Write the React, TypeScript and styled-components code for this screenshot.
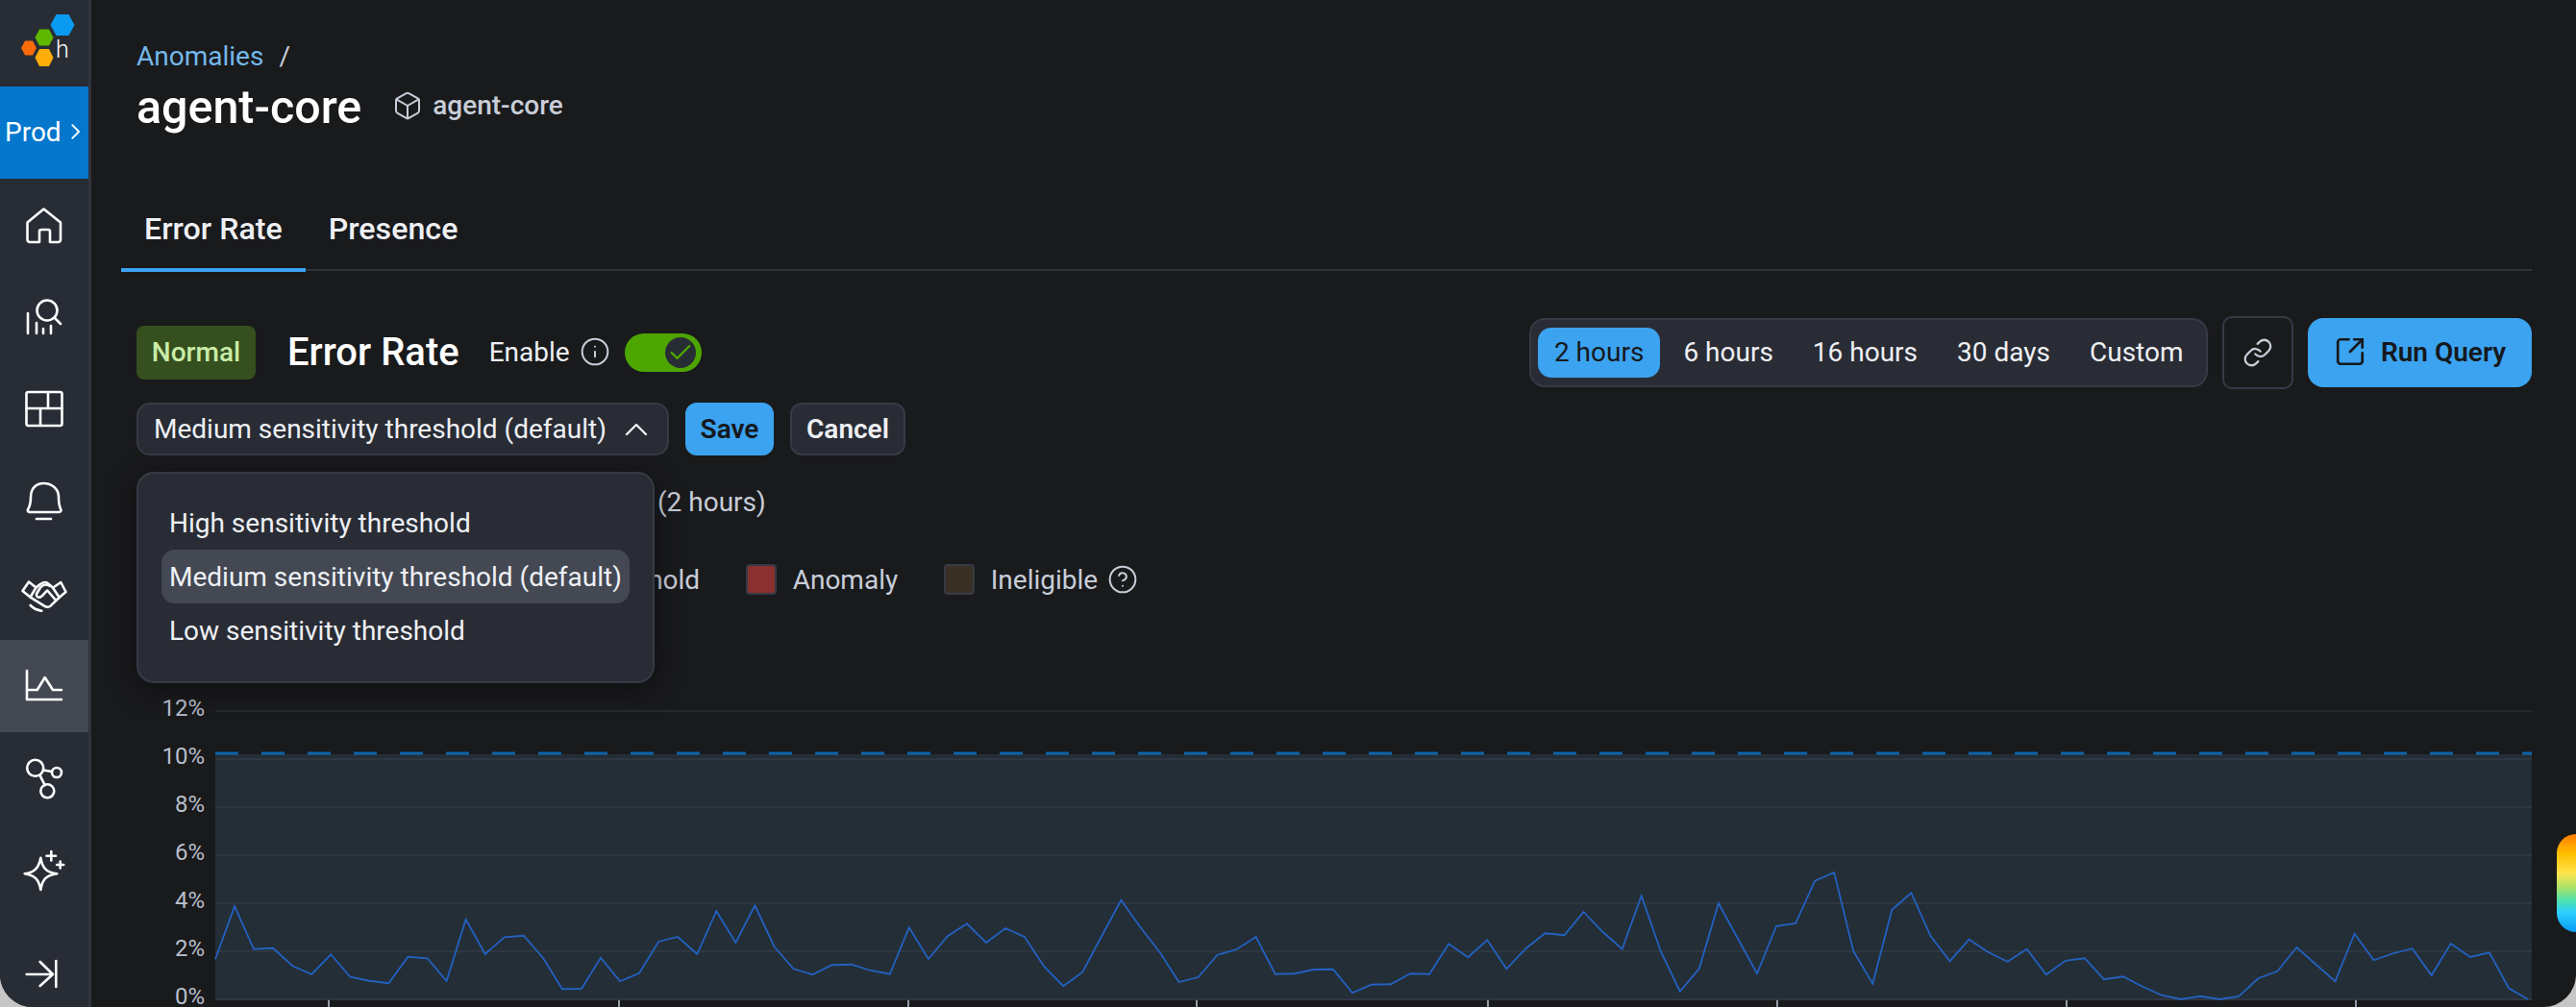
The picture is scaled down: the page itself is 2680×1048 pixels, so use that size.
import styled, { createGlobalStyle } from 'styled-components';
import {
  Box,
  ChevronRight,
  ChevronUp,
  Check,
  CircleHelp,
  Info,
  Link,
  SquareArrowOutUpRight,
} from 'lucide-react';

const GlobalStyle = createGlobalStyle`
  html, body {
    margin: 0;
    padding: 0;
    background: #c6c6c6;
  }
  body {
    font-family: Roboto, "Liberation Sans", sans-serif;
    font-size: 28px;
    color: #eef0f4;
  }
`;

const Shell = styled.div`
  position: relative;
  display: flex;
  width: 2680px;
  height: 1048px;
  overflow: hidden;
  background: #191a1c;
  border-radius: 0 0 34px 34px;
`;

const Sidebar = styled.nav`
  flex: none;
  display: flex;
  flex-direction: column;
  box-sizing: content-box;
  width: 92px;
  background: #282c35;
  border-right: 3px solid #30343d;
`;

const LogoWrap = styled.div`
  height: 90px;
  flex: none;
`;

const EnvButton = styled.div`
  flex: none;
  display: flex;
  align-items: center;
  justify-content: center;
  box-sizing: border-box;
  height: 96px;
  gap: 1px;
  padding: 0 0 2px 5px;
  background: #0577cc;
  color: #fff;
`;

const NavItem = styled.div<{ $active?: boolean }>`
  flex: none;
  display: flex;
  align-items: center;
  justify-content: center;
  height: 96px;
  background: ${(p) => (p.$active ? '#434853' : 'transparent')};
`;

const CollapseItem = styled(NavItem)`
  margin-top: 11px;
`;

const NavSvg = styled.svg`
  width: 48px;
  height: 48px;
  fill: none;
  stroke: #fff;
  stroke-width: 2.6;
  stroke-linecap: round;
  stroke-linejoin: round;
`;

const Main = styled.main`
  flex: 1;
  min-width: 0;
  padding: 40px 46px 0 47px;
`;

const Breadcrumb = styled.div`
  display: flex;
  align-items: center;
  gap: 16px;
  height: 36px;
`;

const CrumbLink = styled.span`
  color: #74b8ea;
`;

const CrumbSlash = styled.span`
  color: #c8cdd8;
`;

const TitleRow = styled.div`
  display: flex;
  align-items: center;
  height: 72px;
`;

const Title = styled.h1`
  margin: 0 32px 2px 0;
  font-size: 48.4px;
  font-weight: 500;
  color: #fff;
`;

const Subtitle = styled.span`
  display: flex;
  align-items: center;
  gap: 10px;
  margin-bottom: 5px;
  font-weight: 500;
  color: #c8cdd8;
`;

const Tabs = styled.div`
  display: flex;
  align-items: flex-end;
  box-sizing: border-box;
  height: 104px;
  margin: 30px 0 0 -16px;
  border-bottom: 2px solid #30343d;
`;

const Tab = styled.div<{ $active?: boolean }>`
  display: flex;
  align-items: flex-end;
  box-sizing: border-box;
  height: 105px;
  margin-bottom: -3px;
  padding: 0 24px 23px;
  line-height: 36px;
  font-size: 32.2px;
  font-weight: 500;
  color: #eef0f4;
  border-bottom: 4px solid ${(p) => (p.$active ? '#3ba3ef' : 'transparent')};
`;

const ControlRow = styled.div`
  display: flex;
  align-items: center;
  justify-content: space-between;
  height: 72px;
  margin-top: 49px;
`;

const ControlGroup = styled.div`
  display: flex;
  align-items: center;
`;

const Badge = styled.span`
  display: flex;
  align-items: center;
  justify-content: center;
  box-sizing: border-box;
  width: 124px;
  height: 56px;
  margin-right: 33px;
  padding-bottom: 2px;
  border-radius: 8px;
  background: #354f1e;
  color: #c9ecA6;
  font-weight: 500;
`;

const SectionTitle = styled.h2`
  margin: 0 31px 2px 0;
  font-size: 40px;
  font-weight: 500;
  color: #fff;
`;

const EnableLabel = styled.span`
  display: flex;
  align-items: center;
  gap: 10px;
  margin: 0 15px 2px 0;
  color: #eef0f4;
`;

const Toggle = styled.span`
  display: flex;
  align-items: center;
  justify-content: flex-end;
  box-sizing: border-box;
  width: 80px;
  height: 40px;
  padding-right: 6px;
  border-radius: 20px;
  background: #4da600;
`;

const ToggleThumb = styled.span`
  display: flex;
  align-items: center;
  justify-content: center;
  width: 32px;
  height: 32px;
  border-radius: 50%;
  background: #282c35;
`;

const RangeGroup = styled.div`
  display: flex;
  align-items: center;
  gap: 8px;
  box-sizing: border-box;
  height: 72px;
  padding: 0 7px;
  border: 2px solid #363a45;
  border-radius: 16px;
  background: #292c35;
`;

const RangeOption = styled.span<{ $active?: boolean }>`
  display: flex;
  align-items: center;
  box-sizing: border-box;
  height: 52px;
  padding: 0 16.5px 2px;
  border-radius: 14px;
  background: ${(p) => (p.$active ? '#3ba3ef' : 'transparent')};
  color: ${(p) => (p.$active ? '#16181c' : '#eef0f4')};
`;

const LinkButton = styled.span`
  display: flex;
  align-items: center;
  justify-content: center;
  box-sizing: border-box;
  width: 74px;
  height: 76px;
  margin: 0 15px;
  border: 2px solid #363a45;
  border-radius: 10px;
  color: #c8cdd8;
`;

const RunButton = styled.span`
  display: flex;
  align-items: center;
  justify-content: center;
  gap: 15px;
  box-sizing: border-box;
  width: 233px;
  height: 72px;
  padding-bottom: 2px;
  border-radius: 16px;
  background: #3ba3ef;
  color: #16181c;
  font-weight: 600;
`;

const SelectRow = styled.div`
  display: flex;
  align-items: center;
  gap: 17px;
  height: 55px;
  margin-top: 16px;
`;

const SelectWrap = styled.div`
  position: relative;
  height: 100%;
`;

const SelectBox = styled.div`
  display: flex;
  align-items: center;
  justify-content: space-between;
  box-sizing: border-box;
  width: 554px;
  height: 100%;
  padding: 0 12px 0 16px;
  border: 2px solid #363a45;
  border-radius: 14px;
  background: #292c35;
  color: #eef0f4;
`;

const Dropdown = styled.div`
  position: absolute;
  top: calc(100% + 17px);
  left: 0;
  z-index: 2;
  box-sizing: border-box;
  width: 539px;
  height: 220px;
  padding: 23px 24px;
  border: 2px solid #363a45;
  border-radius: 18px;
  background: #292c35;
  box-shadow: 0 6px 30px rgba(0, 0, 0, 0.45);
`;

const DropdownItem = styled.div<{ $active?: boolean }>`
  display: flex;
  align-items: center;
  height: 56px;
  padding: 0 8px;
  border-radius: 14px;
  white-space: nowrap;
  background: ${(p) => (p.$active ? '#434853' : 'transparent')};
  color: #eef0f4;
`;

const ActionButton = styled.span<{ $primary?: boolean }>`
  display: flex;
  align-items: center;
  justify-content: center;
  box-sizing: border-box;
  width: ${(p) => (p.$primary ? '92px' : '120px')};
  height: 100%;
  border-radius: 12px;
  font-weight: 600;
  background: ${(p) => (p.$primary ? '#3ba3ef' : '#292c35')};
  border: 2px solid ${(p) => (p.$primary ? '#3ba3ef' : '#363a45')};
  color: ${(p) => (p.$primary ? '#16181c' : '#eef0f4')};
`;

const TimeNote = styled.div`
  height: 36px;
  margin-top: 31px;
  padding-left: 542px;
  line-height: 36px;
  color: #c8cdd8;
`;

const Legend = styled.div`
  display: flex;
  align-items: center;
  height: 36px;
  margin-top: 44px;
  padding-left: 461.5px;
  color: #c8cdd8;
`;

const LegendLabel = styled.span`
  display: flex;
  align-items: center;
  gap: 10px;
  margin-right: 47.5px;
`;

const Swatch = styled.span<{ $color: string }>`
  box-sizing: border-box;
  width: 32px;
  height: 32px;
  margin-right: 17px;
  border: 2px solid #363a45;
  border-radius: 4px;
  background: ${(p) => p.$color};
`;

const ChartSvg = styled.svg`
  display: block;
  width: 2492px;
  height: 328px;
  margin-top: 99px;
  overflow: hidden;
`;

const AxisLabel = styled.text`
  font-family: Roboto, "Liberation Sans", sans-serif;
  font-size: 24px;
  fill: #b8bfcc;
  text-anchor: end;
`;

const FloatingTab = styled.div`
  position: absolute;
  right: 0;
  top: 868px;
  width: 20px;
  height: 102px;
  border-radius: 20px 0 0 20px;
  background: linear-gradient(
    180deg,
    #ff7a00 0%,
    #ffbf00 20%,
    #ffe44d 40%,
    #a6e36b 55%,
    #4de0b0 68%,
    #2bd0ff 80%,
    #0a9af2 100%
  );
`;

const ranges = ['2 hours', '6 hours', '16 hours', '30 days', 'Custom'];
const sensitivities = [
  'High sensitivity threshold',
  'Medium sensitivity threshold (default)',
  'Low sensitivity threshold',
];
const axis = [12, 10, 8, 6, 4, 2, 0];
const ticks = [342, 644, 945, 1245, 1548, 1849, 2150, 2451];
const errorRate = [
  1.67, 3.87, 2.09, 2.13, 1.39, 1.04, 1.87, 0.93, 0.77, 0.67, 1.77, 1.71, 0.76, 3.33, 1.88, 2.59,
  2.65, 1.73, 0.43, 0.44, 1.73, 0.75, 1.09, 2.4, 2.6, 1.88, 3.67, 2.36, 3.91, 2.2, 1.27, 1.03, 1.43,
  1.45, 1.2, 1.05, 2.99, 1.68, 2.63, 3.15, 2.36, 2.96, 2.59, 1.37, 0.55, 1.13, 2.64, 4.13, 3.0, 1.97,
  0.72, 0.92, 1.85, 2.08, 2.6, 1.05, 1.07, 1.24, 1.25, 0.27, 0.61, 0.63, 1.07, 1.05, 2.31, 1.75, 2.47,
  1.27, 2.11, 2.75, 2.67, 3.64, 2.8, 2.09, 4.31, 2.0, 0.33, 1.28, 4.0, 2.53, 1.07, 3.05, 3.16, 4.93,
  5.28, 2.0, 0.65, 3.73, 4.43, 2.64, 1.59, 2.49, 1.96, 1.57, 2.09, 1.03, 1.61, 1.71, 0.83, 0.95, 0.53,
  0.17, 0, 0.13, 0, 0.12, 0.87, 1.17, 2.16, 1.45, 0.75, 2.73, 1.63, 1.91, 2.11, 1.0, 2.32, 1.76, 1.95,
  0.47, 0,
];

// chart coordinates: the svg starts at page x 142, y 720
const plotLeft = 82;
const plotRight = 2492;
const zeroY = 320;
const percentY = (v: number) => zeroY - v * 25;
const linePoints = errorRate
  .map((v, i) => `${plotLeft + i * 20.05},${percentY(v)}`)
  .join(' ');

const Logo = () => (
  <svg width="92" height="90" viewBox="0 0 92 90">
    <polygon points="52.5,26 58.5,15 71.5,15 77.5,26 71.5,37 58.5,37" fill="#0a9af2" />
    <polygon points="36.5,39 41,30.5 51,30.5 55.5,39 51,47.5 41,47.5" fill="#5fb700" />
    <polygon points="22,50 26,42.5 34,42.5 38,50 34,57.5 26,57.5" fill="#f96b0a" />
    <polygon points="36.5,60 41,51 51,51 55.5,60 51,69 41,69" fill="#ffad0a" />
    <text x="58" y="60" fontFamily="Roboto, sans-serif" fontWeight="300" fontSize="25" fill="#fff">
      h
    </text>
  </svg>
);

const HomeIcon = () => (
  <NavSvg viewBox="0 0 48 48">
    <path d="M6.5 21.5 23.5 7.5 41 21.5V39.5a2.5 2.5 0 0 1-2.5 2.5H30V31a2 2 0 0 0-2-2h-7a2 2 0 0 0-2 2V42H9a2.5 2.5 0 0 1-2.5-2.5Z" />
  </NavSvg>
);

const QueryIcon = () => (
  <NavSvg viewBox="0 0 48 48">
    <circle cx="27" cy="17" r="10.5" />
    <path d="M35 25 41 31M7 20V41M16 30V41M23 36V41M31 33V41" />
  </NavSvg>
);

const BoardIcon = () => (
  <NavSvg viewBox="0 0 48 48">
    <rect x="5.5" y="6" width="37" height="35" rx="2" />
    <path d="M5.5 23H42.5M28 6V23M20 23V41" />
  </NavSvg>
);

const BellIcon = () => (
  <NavSvg viewBox="0 0 48 48">
    <path d="M8.5 35H39.5a2 2 0 0 0 1.8-2.8C39.5 28.5 39 24 39 19 39 11 32 5 23.5 5S10 11 10 19C10 24 9.5 28.5 7 32.2A2 2 0 0 0 8.5 35Z" />
    <path d="M16 42H31" />
  </NavSvg>
);

const HandshakeIcon = () => (
  <NavSvg viewBox="0 0 48 48">
    <path d="M1.5 21 8 11.5 15.5 17.5 9.5 27.5Z" />
    <path d="M46.5 22 41.3 12 33 17.7 39.7 27.7Z" />
    <path d="M15.5 17.5C18 15.5 21 12 25 12 28 12 30.5 15.5 33 17.7" />
    <path d="M9.7 27.7 24.5 36.8C26 37.8 29 38 30.5 36.6L39.7 27.7" />
    <path d="M30 16C26 13.5 22 14.5 20 17.5L16.3 23.5C15.3 25.3 16.5 27.8 19 27.7 22 27.5 24.5 22.5 27.3 20.5L35.5 30" />
    <path d="M9.7 36C13 39.5 17 41 21.3 41.7" />
  </NavSvg>
);

const AnomalyIcon = () => (
  <NavSvg viewBox="0 0 48 48" strokeLinecap="square">
    <path d="M6 8V38H42M6 28H16.7L24.7 15 33 28H42" />
  </NavSvg>
);

const GraphIcon = () => (
  <NavSvg viewBox="0 0 48 48">
    <circle cx="14.7" cy="13.3" r="8.5" />
    <circle cx="37" cy="18" r="5" />
    <circle cx="27.3" cy="37.3" r="7" />
    <path d="M23 15.5 32 17M19.7 21.3 24.7 31.2" />
  </NavSvg>
);

const SparkleIcon = () => (
  <NavSvg viewBox="0 0 48 48">
    <path d="M20.3 10.7C22 21 26 26 37.3 27.3 26 29 22 33 20.3 44 18.5 33 14 29 3.7 27.3 14 26 18.5 21 20.3 10.7Z" />
    <path d="M31.3 4V13.5M26.5 8.7H36M40.7 14.5V21.5M37.2 18H44.2" />
  </NavSvg>
);

const CollapseIcon = () => (
  <NavSvg viewBox="0 0 48 48">
    <path d="M36.3 11V38M5.7 25H33M19.7 12 33 25 19.7 37" />
  </NavSvg>
);

const ChartArea = () => (
  <ChartSvg viewBox="0 0 2492 328">
    <rect x={plotLeft} y={65} width={plotRight - plotLeft} height={255} fill="#242e37" />
    {axis.map((v) => (
      <g key={v}>
        <line
          x1={plotLeft}
          x2={plotRight}
          y1={percentY(v)}
          y2={percentY(v)}
          stroke={v === 12 ? '#26292d' : '#2e3741'}
          strokeWidth="2"
        />
        <AxisLabel x={71} y={percentY(v) + 5}>
          {v}%
        </AxisLabel>
      </g>
    ))}
    <line
      x1={plotLeft}
      x2={plotRight}
      y1={64}
      y2={64}
      stroke="#0e64ac"
      strokeWidth="3"
      strokeDasharray="24 24"
    />
    <polyline points={linePoints} fill="none" stroke="#2361c0" strokeWidth="1.8" />
    {ticks.map((x) => (
      <line key={x} x1={x - 142} x2={x - 142} y1={321} y2={328} stroke="#b8bfcc" strokeWidth="1.6" />
    ))}
  </ChartSvg>
);

const App = () => (
  <>
    <GlobalStyle />
    <Shell>
      <Sidebar>
        <LogoWrap>
          <Logo />
        </LogoWrap>
        <EnvButton>
          Prod
          <ChevronRight size={28} strokeWidth={1.6} />
        </EnvButton>
        <NavItem><HomeIcon /></NavItem>
        <NavItem><QueryIcon /></NavItem>
        <NavItem><BoardIcon /></NavItem>
        <NavItem><BellIcon /></NavItem>
        <NavItem><HandshakeIcon /></NavItem>
        <NavItem $active><AnomalyIcon /></NavItem>
        <NavItem><GraphIcon /></NavItem>
        <NavItem><SparkleIcon /></NavItem>
        <CollapseItem><CollapseIcon /></CollapseItem>
      </Sidebar>
      <Main>
        <Breadcrumb>
          <CrumbLink>Anomalies</CrumbLink>
          <CrumbSlash>/</CrumbSlash>
        </Breadcrumb>
        <TitleRow>
          <Title>agent-core</Title>
          <Subtitle>
            <Box size={32} strokeWidth={1.5} />
            agent-core
          </Subtitle>
        </TitleRow>
        <Tabs>
          <Tab $active>Error Rate</Tab>
          <Tab>Presence</Tab>
        </Tabs>
        <ControlRow>
          <ControlGroup>
            <Badge>Normal</Badge>
            <SectionTitle>Error Rate</SectionTitle>
            <EnableLabel>
              Enable
              <Info size={32} strokeWidth={1.5} color="#c8cdd8" />
            </EnableLabel>
            <Toggle>
              <ToggleThumb>
                <Check size={28} strokeWidth={2} color="#4da600" />
              </ToggleThumb>
            </Toggle>
          </ControlGroup>
          <ControlGroup>
            <RangeGroup>
              {ranges.map((r, i) => (
                <RangeOption key={r} $active={i === 0}>
                  {r}
                </RangeOption>
              ))}
            </RangeGroup>
            <LinkButton>
              <Link size={32} strokeWidth={1.7} />
            </LinkButton>
            <RunButton>
              <SquareArrowOutUpRight size={34} strokeWidth={1.9} />
              Run Query
            </RunButton>
          </ControlGroup>
        </ControlRow>
        <SelectRow>
          <SelectWrap>
            <SelectBox>
              Medium sensitivity threshold (default)
              <ChevronUp size={40} strokeWidth={1.4} />
            </SelectBox>
            <Dropdown>
              {sensitivities.map((s, i) => (
                <DropdownItem key={s} $active={i === 1}>
                  {s}
                </DropdownItem>
              ))}
            </Dropdown>
          </SelectWrap>
          <ActionButton $primary>Save</ActionButton>
          <ActionButton>Cancel</ActionButton>
        </SelectRow>
        <TimeNote>(2 hours)</TimeNote>
        <Legend>
          <LegendLabel>Threshold</LegendLabel>
          <Swatch $color="#8a302f" />
          <LegendLabel>Anomaly</LegendLabel>
          <Swatch $color="#3a3024" />
          <LegendLabel>
            Ineligible
            <CircleHelp size={32} strokeWidth={1.5} />
          </LegendLabel>
        </Legend>
        <ChartArea />
      </Main>
      <FloatingTab />
    </Shell>
  </>
);

export default App;
